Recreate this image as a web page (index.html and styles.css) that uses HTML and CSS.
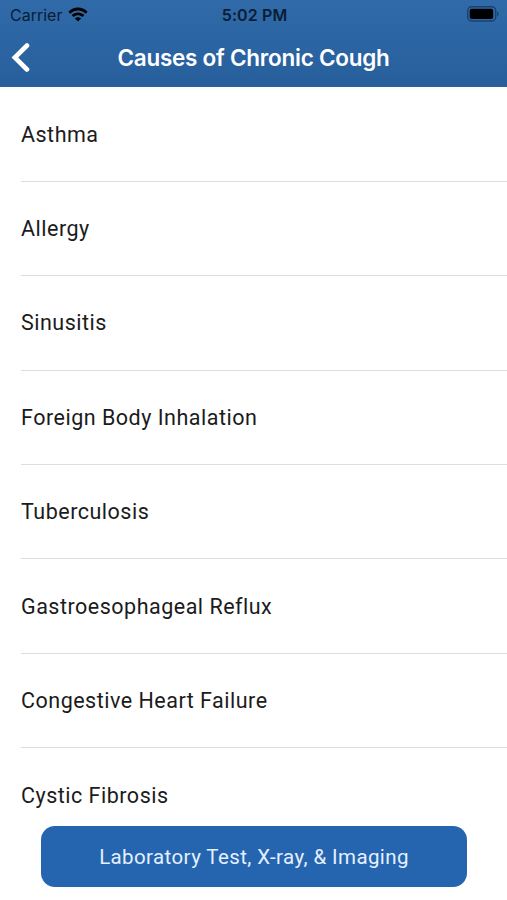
FILE: index.html
```html
<!DOCTYPE html>
<html lang="en">
<head>
<meta charset="utf-8">
<title>Causes of Chronic Cough</title>
<link rel="stylesheet" href="styles.css">
</head>
<body>
<header class="header">
  <div class="status">
    <div class="carrier"><span class="carrier-name">Carrier</span>
      <svg class="wifi" viewBox="0 0 20 15"><path d="M.4 4.700C6-.9 14-.9 19.600 4.700L17.700 6.700C13 2.300 7 2.300 2.300 6.700Z"/><path d="M3.600 8C7.300 4.500 12.700 4.500 16.400 8L14.400 10C11.600 7.500 8.400 7.500 5.600 10Z"/><path d="M6.900 11.400C8.700 9.900 11.300 9.900 13.100 11.400L10 14.500Z"/></svg>
    </div>
    <span class="time">5:02 PM</span>
    <svg class="battery" viewBox="0 0 32 16"><rect class="shell" x=".7" y=".7" width="28" height="14.300" rx="4"/><rect x="2.700" y="2.700" width="23.500" height="10.300" rx="2"/><path class="cap" d="M30.200 5.500c2 1 2 4 0 5z"/></svg>
  </div>
  <div class="nav">
    <svg class="back" viewBox="0 0 20 30"><path d="M17 2.500L4.800 14.500L17 26.500"/></svg>
    <h1 class="title">Causes of Chronic Cough</h1>
  </div>
</header>
<ul class="list">
  <li class="row">Asthma</li>
  <li class="row">Allergy</li>
  <li class="row">Sinusitis</li>
  <li class="row">Foreign Body Inhalation</li>
  <li class="row">Tuberculosis</li>
  <li class="row">Gastroesophageal Reflux</li>
  <li class="row">Congestive Heart Failure</li>
  <li class="row">Cystic Fibrosis</li>
</ul>
<button class="action">Laboratory Test, X-ray, &amp; Imaging</button>
</body>
</html>
```
FILE: styles.css
```css
* { box-sizing: border-box; }
body { margin: 0; height: 900px; overflow: hidden; background: #fff; font-family: Inter, sans-serif; color: #1b1b1b; position: relative; }
.header { height: 87px; background: linear-gradient(#306aa9, #275f9c); }
.status { height: 29px; display: grid; grid-template-columns: 1fr auto 1fr; align-items: center; padding: 0 8px 0 10px; color: #0b1d33; font-size: 16px; }
.carrier { display: flex; align-items: center; gap: 6px; }
.wifi { width: 20px; height: 15px; fill: #000; }
.time { font-weight: 600; letter-spacing: .1px; }
.battery { width: 32px; height: 16px; justify-self: end; margin-top: -1px; }
.shell { fill: none; stroke: #1b4169; stroke-width: 1.400; }
.cap { fill: #1b4169; }
.nav { height: 58px; display: grid; grid-template-columns: 40px 1fr 40px; align-items: center; }
.back { width: 20px; height: 30px; margin-left: 10px; fill: none; stroke: #fff; stroke-width: 4.600; stroke-linecap: round; }
.title { margin: 0; text-align: center; color: #fff; font-size: 22.500px; line-height: 26px; letter-spacing: -.25px; font-weight: 600; white-space: nowrap; }
.list { list-style: none; margin: 0; padding: .5px 0 0 21px; }
.row { height: 94.400px; display: flex; align-items: center; border-bottom: 1px solid #dedede; font-family: Roboto, sans-serif; font-size: 21.500px; letter-spacing: .5px; }
.row:last-child { border: 0; }
.action { position: absolute; left: 41px; top: 826px; width: 426px; height: 61px; border: 0; border-radius: 14px; background: #2565af; color: #e4f0ff; font: 20.500px Roboto, sans-serif; letter-spacing: .4px; }
```
